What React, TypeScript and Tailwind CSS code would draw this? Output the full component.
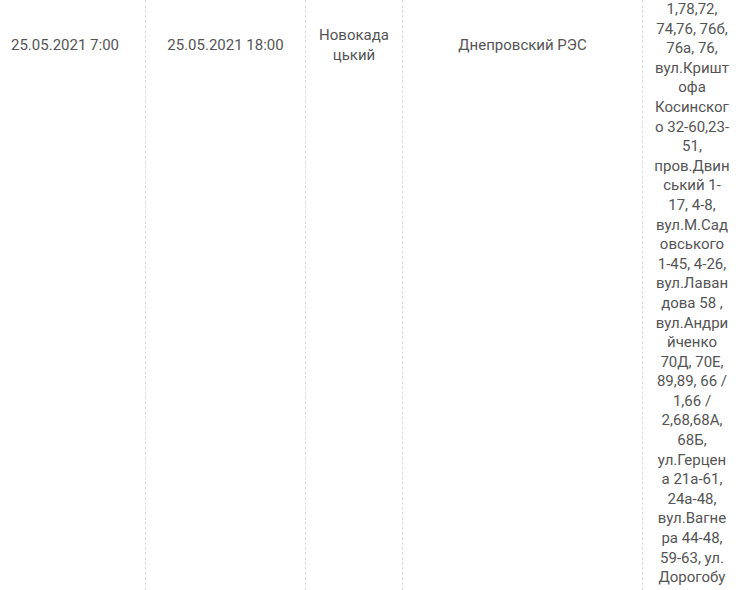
const addressLines = [
  "1,78,72,",
  "74,76, 76б,",
  "76а, 76,",
  "вул.Кришт",
  "офа",
  "Косинског",
  "о 32-60,23-",
  "51,",
  "пров.Двин",
  "ський 1-",
  "17, 4-8,",
  "вул.М.Сад",
  "овського",
  "1-45, 4-26,",
  "вул.Лаван",
  "дова 58 ,",
  "вул.Андри",
  "йченко",
  "70Д, 70Е,",
  "89,89, 66 /",
  "1,66 /",
  "2,68,68А,",
  "68Б,",
  "ул.Герцен",
  "а 21а-61,",
  "24а-48,",
  "вул.Вагне",
  "ра 44-48,",
  "59-63, ул.",
  "Дорогобу",
];

const cell = "flex h-[92px] items-center justify-center px-[10px] text-center";

export default function App() {
  return (
    <div className="h-[590px] w-[740px] overflow-hidden bg-white font-['Roboto',sans-serif] text-[15px] leading-[19.6px] text-[#555]">
      <div className="-ml-[15px] flex h-full w-max">
        <div className="h-full w-[160px]">
          <div className={cell}>25.05.2021 7:00</div>
        </div>
        <div className="h-full w-[160px] border-l border-dashed border-[#ddd]">
          <div className={cell}>25.05.2021 18:00</div>
        </div>
        <div className="h-full w-[97px] border-l border-dashed border-[#ddd]">
          <div className={cell}>
            <span className="min-w-0 [overflow-wrap:anywhere]">Новокадацький</span>
          </div>
        </div>
        <div className="h-full w-[240px] border-l border-dashed border-[#ddd]">
          <div className={cell}>Днепровский РЭС</div>
        </div>
        <div className="h-full w-[100px] border-x border-dashed border-[#ddd] px-[10px] text-center">
          {addressLines.map((line, i) => (
            <span key={i} className="block whitespace-nowrap">{line}</span>
          ))}
        </div>
      </div>
    </div>
  );
}
